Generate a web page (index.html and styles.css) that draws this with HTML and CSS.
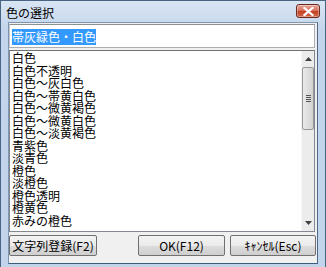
FILE: index.html
```html
<!DOCTYPE html>
<html lang="ja">
<head>
<meta charset="utf-8">
<title>色の選択</title>
<link rel="stylesheet" href="styles.css">
</head>
<body>
<div class="window">
  <div class="titlebar">
    <span class="title">色の選択</span>
    <div class="close">
      <svg width="11" height="9" viewBox="0 0 11 9"><path d="M1.5 1 L9.5 8 M9.5 1 L1.5 8" stroke="#ffffff" stroke-width="2.2" stroke-linecap="square"/></svg>
    </div>
  </div>
  <div class="client">
    <div class="input"><span class="sel">帯灰緑色・白色</span></div>
    <div class="listbox">
      <ul class="items">
        <li>白色</li>
        <li>白色不透明</li>
        <li>白色～灰白色</li>
        <li>白色～帯黄白色</li>
        <li>白色～微黄褐色</li>
        <li>白色～微黄白色</li>
        <li>白色～淡黄褐色</li>
        <li>青紫色</li>
        <li>淡青色</li>
        <li>橙色</li>
        <li>淡橙色</li>
        <li>橙色透明</li>
        <li>橙黄色</li>
        <li>赤みの橙色</li>
      </ul>
      <div class="scrollbar">
        <div class="arrow up"><svg width="7" height="4" viewBox="0 0 7 4"><path d="M3.5 0 L7 4 L0 4 Z" fill="#404040"/></svg></div>
        <div class="thumb">
          <div class="grip"><i></i><i></i><i></i><i></i></div>
        </div>
        <div class="track"></div>
        <div class="arrow down"><svg width="7" height="4" viewBox="0 0 7 4"><path d="M0 0 L7 0 L3.5 4 Z" fill="#404040"/></svg></div>
      </div>
    </div>
    <div class="buttons">
      <div class="btn btn-reg">文字列登録(F2)</div>
      <div class="btn btn-ok">OK(F12)</div>
      <div class="btn btn-cancel">ｷｬﾝｾﾙ(Esc)</div>
    </div>
  </div>
</div>
</body>
</html>
```
FILE: styles.css
```css
* { box-sizing: border-box; }
html, body { margin: 0; padding: 0; }
body {
  width: 326px;
  height: 267px;
  overflow: hidden;
  font-family: "Noto Sans CJK JP", "Noto Sans", sans-serif;
  font-size: 12px;
  color: #000;
}
.window {
  width: 326px;
  height: 267px;
  border: 1px solid #4a6584;
  border-bottom: none;
  background: linear-gradient(#d9e5f3, #c3d5ec 30px, #c2d4eb);
  padding: 0 7px 3px 7px;
  display: flex;
  flex-direction: column;
}
.titlebar {
  height: 21px;
  flex: none;
  display: flex;
  align-items: center;
  justify-content: space-between;
  position: relative;
}
.title {
  font-size: 12px;
  line-height: 12px;
  padding-left: -1px;
  margin-left: -2px;
  margin-top: 2px;
  color: #000;
}
.close {
  width: 24px;
  height: 14px;
  margin-right: -2px;
  margin-top: -1px;
  border: 1px solid #6b2a20;
  border-radius: 3px;
  background: linear-gradient(#e9a99c, #d7725f 45%, #c4401f 55%, #cf6a4e);
  box-shadow: inset 0 0 0 1px rgba(255,255,255,0.35);
  display: flex;
  align-items: center;
  justify-content: center;
}
.client {
  flex: 1;
  background: #f0f0f0;
  border: 1px solid #7f95b0;
  border-right-color: #4e6888;
  border-bottom-color: #3c5e7e;
  padding: 1px 1px 0 0;
  display: flex;
  flex-direction: column;
}
.input {
  height: 24px;
  flex: none;
  background: #fff;
  border: 1px solid #abadb3;
  border-top-color: #8e8f8f;
  border-left-color: #e2e3ea;
  border-left: 1px solid #c5c5c5;
  margin-right: 1px;
  padding: 3px 0 0 2px;
}
.sel {
  display: inline-block;
  background: #3399ff;
  color: #fff;
  font-size: 12px;
  line-height: 16px;
  height: 16px;
  padding: 0 0 0 0;
}
.listbox {
  margin-top: 2px;
  height: 182px;
  flex: none;
  margin-right: 1px;
  background: #fff;
  border: 1px solid #828790;
  border-top-color: #6e7277;
  display: flex;
}
.items {
  list-style: none;
  margin: 0;
  padding: 1px 0 0 2px;
  flex: 1;
}
.items li {
  height: 12.5px;
  line-height: 12.5px;
  font-size: 12px;
  white-space: nowrap;
}
.scrollbar {
  width: 13px;
  flex: none;
  background: #ececec;
  border-left: 1px solid #f6f6f6;
  display: flex;
  flex-direction: column;
}
.arrow {
  height: 16px;
  flex: none;
  display: flex;
  align-items: center;
  justify-content: center;
}
.thumb {
  height: 63px;
  flex: none;
  margin: 0 0 0 0;
  border: 1px solid #979797;
  border-radius: 2px;
  background: linear-gradient(90deg, #eaeaea, #dedede 50%, #d2d2d2);
  display: flex;
  align-items: center;
  justify-content: center;
}
.grip {
  display: flex;
  flex-direction: column;
  gap: 1px;
}
.grip i {
  display: block;
  width: 5px;
  height: 1px;
  background: #555;
}
.track { flex: 1; }
.buttons {
  margin-top: 3px;
  display: flex;
  gap: 5px;
}
.btn {
  height: 21px;
  border: 1px solid #707070;
  border-radius: 2px;
  background: linear-gradient(#f3f3f3, #ebebeb 50%, #dddddd 50%, #cfcfcf);
  display: flex;
  align-items: center;
  justify-content: center;
  font-size: 12px;
  line-height: 12px;
  white-space: nowrap;
}
.btn-reg { width: 88px; margin-right: auto; }
.btn-ok { width: 87px; }
.btn-cancel { width: 86px; }
```
